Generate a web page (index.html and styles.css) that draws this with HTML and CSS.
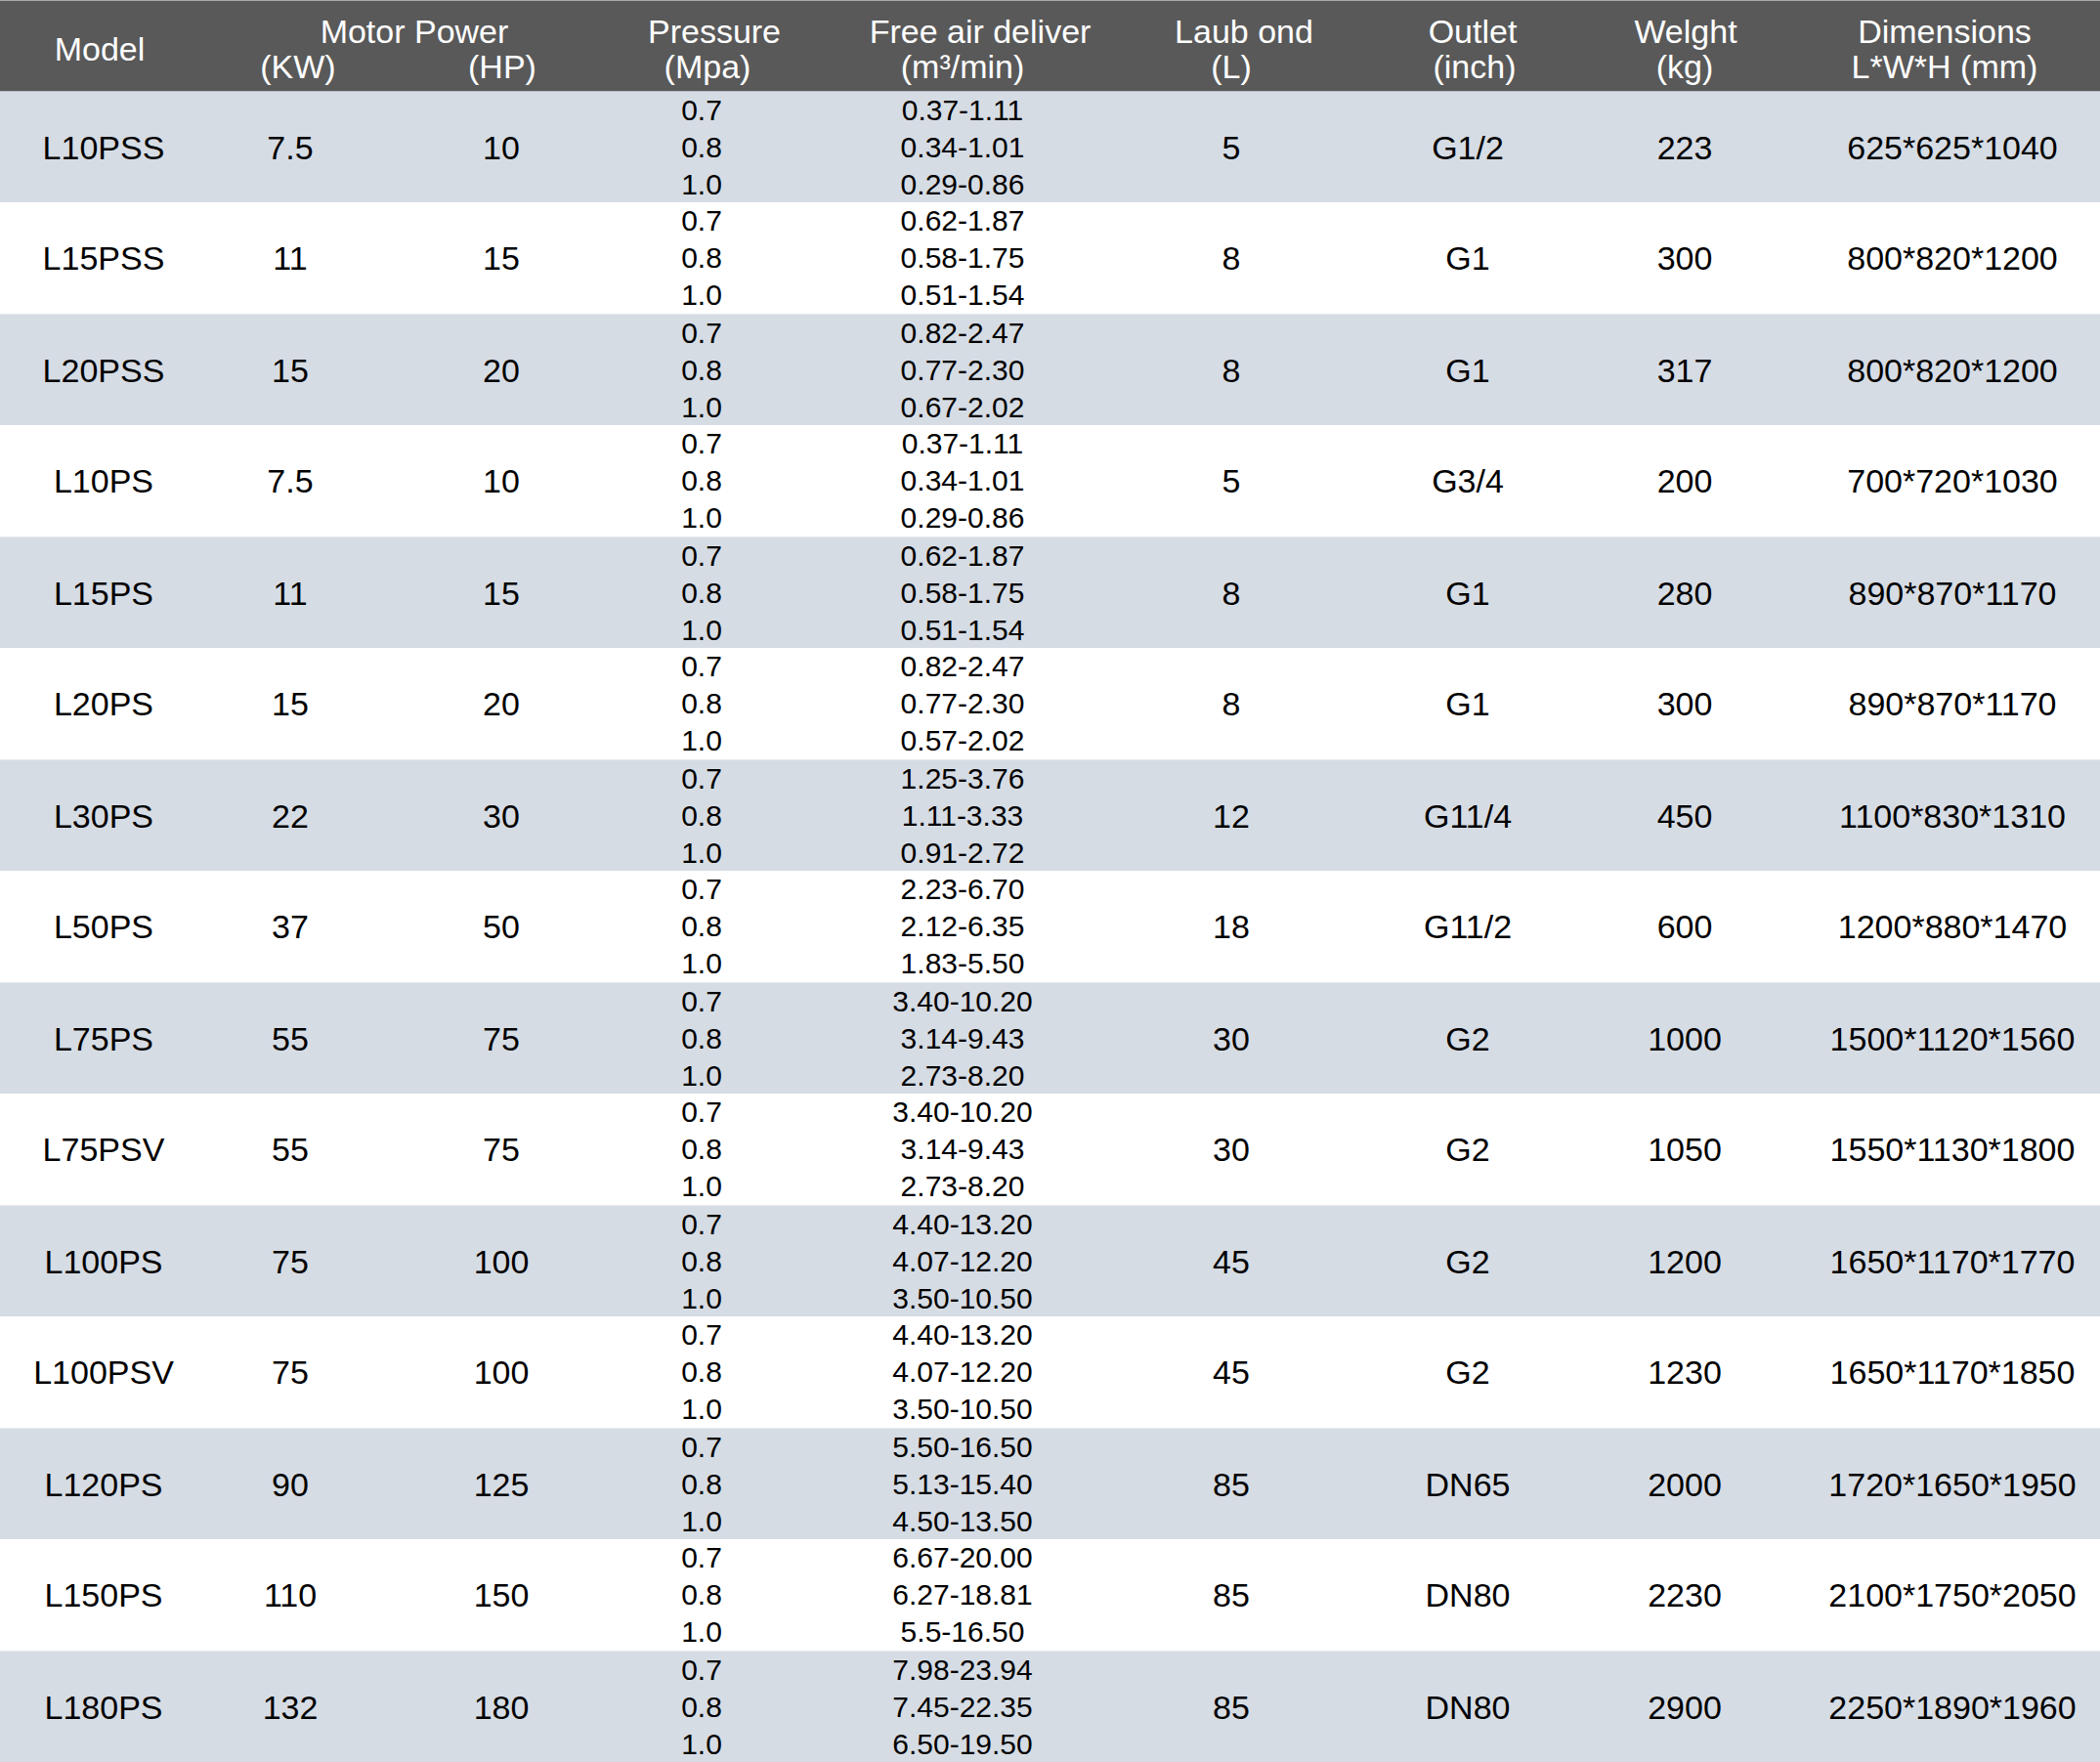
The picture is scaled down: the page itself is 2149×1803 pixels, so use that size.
FILE: index.html
```html
<!DOCTYPE html>
<html lang="en">
<head>
<meta charset="utf-8">
<title>Compressor specifications</title>
<link rel="stylesheet" href="styles.css">
</head>
<body>
<div class="spec">
  <div class="head">
    <div class="hcell h-model"><span class="hl sn4">Model</span></div>
    <div class="hcell h-motor"><span class="hl sn4">Motor Power</span></div>
    <div class="hcell h-kw"><span class="hl s8">(KW)</span></div>
    <div class="hcell h-hp"><span class="hl s1">(HP)</span></div>
    <div class="hcell h-two c4"><span class="hl s13">Pressure</span><span class="hl s6">(Mpa)</span></div>
    <div class="hcell h-two c5"><span class="hl s18">Free air deliver</span><span class="hl">(m³/min)</span></div>
    <div class="hcell h-two c6"><span class="hl s13">Laub ond</span><span class="hl">(L)</span></div>
    <div class="hcell h-two c7"><span class="hl s5">Outlet</span><span class="hl s7">(inch)</span></div>
    <div class="hcell h-two c8"><span class="hl s1">Welght</span><span class="hl">(kg)</span></div>
    <div class="hcell h-two c9"><span class="hl sn8">Dimensions</span><span class="hl sn8">L*W*H (mm)</span></div>
  </div>

  <div class="row alt"><div class="cell">L10PSS</div><div class="cell">7.5</div><div class="cell">10</div><div class="cell multi"><span>0.7</span><span>0.8</span><span>1.0</span></div><div class="cell multi"><span>0.37-1.11</span><span>0.34-1.01</span><span>0.29-0.86</span></div><div class="cell">5</div><div class="cell">G1/2</div><div class="cell">223</div><div class="cell dim">625*625*1040</div></div>
  <div class="row"><div class="cell">L15PSS</div><div class="cell">11</div><div class="cell">15</div><div class="cell multi"><span>0.7</span><span>0.8</span><span>1.0</span></div><div class="cell multi"><span>0.62-1.87</span><span>0.58-1.75</span><span>0.51-1.54</span></div><div class="cell">8</div><div class="cell">G1</div><div class="cell">300</div><div class="cell dim">800*820*1200</div></div>
  <div class="row alt"><div class="cell">L20PSS</div><div class="cell">15</div><div class="cell">20</div><div class="cell multi"><span>0.7</span><span>0.8</span><span>1.0</span></div><div class="cell multi"><span>0.82-2.47</span><span>0.77-2.30</span><span>0.67-2.02</span></div><div class="cell">8</div><div class="cell">G1</div><div class="cell">317</div><div class="cell dim">800*820*1200</div></div>
  <div class="row"><div class="cell">L10PS</div><div class="cell">7.5</div><div class="cell">10</div><div class="cell multi"><span>0.7</span><span>0.8</span><span>1.0</span></div><div class="cell multi"><span>0.37-1.11</span><span>0.34-1.01</span><span>0.29-0.86</span></div><div class="cell">5</div><div class="cell">G3/4</div><div class="cell">200</div><div class="cell dim">700*720*1030</div></div>
  <div class="row alt"><div class="cell">L15PS</div><div class="cell">11</div><div class="cell">15</div><div class="cell multi"><span>0.7</span><span>0.8</span><span>1.0</span></div><div class="cell multi"><span>0.62-1.87</span><span>0.58-1.75</span><span>0.51-1.54</span></div><div class="cell">8</div><div class="cell">G1</div><div class="cell">280</div><div class="cell dim">890*870*1170</div></div>
  <div class="row"><div class="cell">L20PS</div><div class="cell">15</div><div class="cell">20</div><div class="cell multi"><span>0.7</span><span>0.8</span><span>1.0</span></div><div class="cell multi"><span>0.82-2.47</span><span>0.77-2.30</span><span>0.57-2.02</span></div><div class="cell">8</div><div class="cell">G1</div><div class="cell">300</div><div class="cell dim">890*870*1170</div></div>
  <div class="row alt"><div class="cell">L30PS</div><div class="cell">22</div><div class="cell">30</div><div class="cell multi"><span>0.7</span><span>0.8</span><span>1.0</span></div><div class="cell multi"><span>1.25-3.76</span><span>1.11-3.33</span><span>0.91-2.72</span></div><div class="cell">12</div><div class="cell">G11/4</div><div class="cell">450</div><div class="cell dim">1100*830*1310</div></div>
  <div class="row"><div class="cell">L50PS</div><div class="cell">37</div><div class="cell">50</div><div class="cell multi"><span>0.7</span><span>0.8</span><span>1.0</span></div><div class="cell multi"><span>2.23-6.70</span><span>2.12-6.35</span><span>1.83-5.50</span></div><div class="cell">18</div><div class="cell">G11/2</div><div class="cell">600</div><div class="cell dim">1200*880*1470</div></div>
  <div class="row alt"><div class="cell">L75PS</div><div class="cell">55</div><div class="cell">75</div><div class="cell multi"><span>0.7</span><span>0.8</span><span>1.0</span></div><div class="cell multi"><span>3.40-10.20</span><span>3.14-9.43</span><span>2.73-8.20</span></div><div class="cell">30</div><div class="cell">G2</div><div class="cell">1000</div><div class="cell dim">1500*1120*1560</div></div>
  <div class="row"><div class="cell">L75PSV</div><div class="cell">55</div><div class="cell">75</div><div class="cell multi"><span>0.7</span><span>0.8</span><span>1.0</span></div><div class="cell multi"><span>3.40-10.20</span><span>3.14-9.43</span><span>2.73-8.20</span></div><div class="cell">30</div><div class="cell">G2</div><div class="cell">1050</div><div class="cell dim">1550*1130*1800</div></div>
  <div class="row alt"><div class="cell">L100PS</div><div class="cell">75</div><div class="cell">100</div><div class="cell multi"><span>0.7</span><span>0.8</span><span>1.0</span></div><div class="cell multi"><span>4.40-13.20</span><span>4.07-12.20</span><span>3.50-10.50</span></div><div class="cell">45</div><div class="cell">G2</div><div class="cell">1200</div><div class="cell dim">1650*1170*1770</div></div>
  <div class="row"><div class="cell">L100PSV</div><div class="cell">75</div><div class="cell">100</div><div class="cell multi"><span>0.7</span><span>0.8</span><span>1.0</span></div><div class="cell multi"><span>4.40-13.20</span><span>4.07-12.20</span><span>3.50-10.50</span></div><div class="cell">45</div><div class="cell">G2</div><div class="cell">1230</div><div class="cell dim">1650*1170*1850</div></div>
  <div class="row alt"><div class="cell">L120PS</div><div class="cell">90</div><div class="cell">125</div><div class="cell multi"><span>0.7</span><span>0.8</span><span>1.0</span></div><div class="cell multi"><span>5.50-16.50</span><span>5.13-15.40</span><span>4.50-13.50</span></div><div class="cell">85</div><div class="cell">DN65</div><div class="cell">2000</div><div class="cell dim">1720*1650*1950</div></div>
  <div class="row"><div class="cell">L150PS</div><div class="cell">110</div><div class="cell">150</div><div class="cell multi"><span>0.7</span><span>0.8</span><span>1.0</span></div><div class="cell multi"><span>6.67-20.00</span><span>6.27-18.81</span><span>5.5-16.50</span></div><div class="cell">85</div><div class="cell">DN80</div><div class="cell">2230</div><div class="cell dim">2100*1750*2050</div></div>
  <div class="row alt"><div class="cell">L180PS</div><div class="cell">132</div><div class="cell">180</div><div class="cell multi"><span>0.7</span><span>0.8</span><span>1.0</span></div><div class="cell multi"><span>7.98-23.94</span><span>7.45-22.35</span><span>6.50-19.50</span></div><div class="cell">85</div><div class="cell">DN80</div><div class="cell">2900</div><div class="cell dim">2250*1890*1960</div></div>
</div>
</body>
</html>
```

FILE: styles.css
```css
html, body {
  margin: 0;
  padding: 0;
  overflow: hidden;
  background: #ffffff;
}

.spec {
  width: 2149px;
  font-family: "Liberation Sans", Arial, sans-serif;
}

.head,
.row {
  display: grid;
  grid-template-columns: 212px 170px 262px 148px 386px 164px 320px 124px 1fr;
}

.head {
  box-sizing: border-box;
  height: 93px;
  padding-top: 13px;
  grid-template-rows: 36px 36px;
  background: #595959;
  border-top: 1px solid #a9a9a9;
  color: #ffffff;
  font-size: 34px;
  line-height: 36px;
}

.hcell {
  display: flex;
  flex-direction: column;
  align-items: center;
  white-space: nowrap;
}

.h-model { grid-column: 1; grid-row: 1 / 3; justify-content: center; }
.h-motor { grid-column: 2 / 4; grid-row: 1; }
.h-kw { grid-column: 2; grid-row: 2; }
.h-hp { grid-column: 3; grid-row: 2; }
.h-two { grid-row: 1 / 3; }
.c4 { grid-column: 4; }
.c5 { grid-column: 5; }
.c6 { grid-column: 6; }
.c7 { grid-column: 7; }
.c8 { grid-column: 8; }
.c9 { grid-column: 9; padding-left: 61px; }

.hl { display: block; }
.sn4 { margin-right: 8px; }
.sn8 { margin-right: 16px; }
.s1 { margin-left: 2px; }
.s5 { margin-left: 10px; }
.s6 { margin-left: 12px; }
.s7 { margin-left: 14px; }
.s8 { margin-left: 16px; }
.s13 { margin-left: 26px; }
.s18 { margin-left: 36px; }

.row {
  box-sizing: border-box;
  height: 114px;
  align-items: center;
  background: #ffffff;
  color: #000000;
  font-size: 34px;
  line-height: 36px;
}

.row.alt {
  background: #d6dce4;
  border-top: 1px solid #e6e9ee;
}

.head + .row.alt {
  border-top: 1px solid #b7bdc5;
}

.cell {
  text-align: center;
  white-space: nowrap;
}

.cell.dim {
  padding-left: 61px;
}

.cell.multi {
  display: flex;
  flex-direction: column;
  align-items: center;
  font-size: 30px;
  line-height: 38px;
}
```
